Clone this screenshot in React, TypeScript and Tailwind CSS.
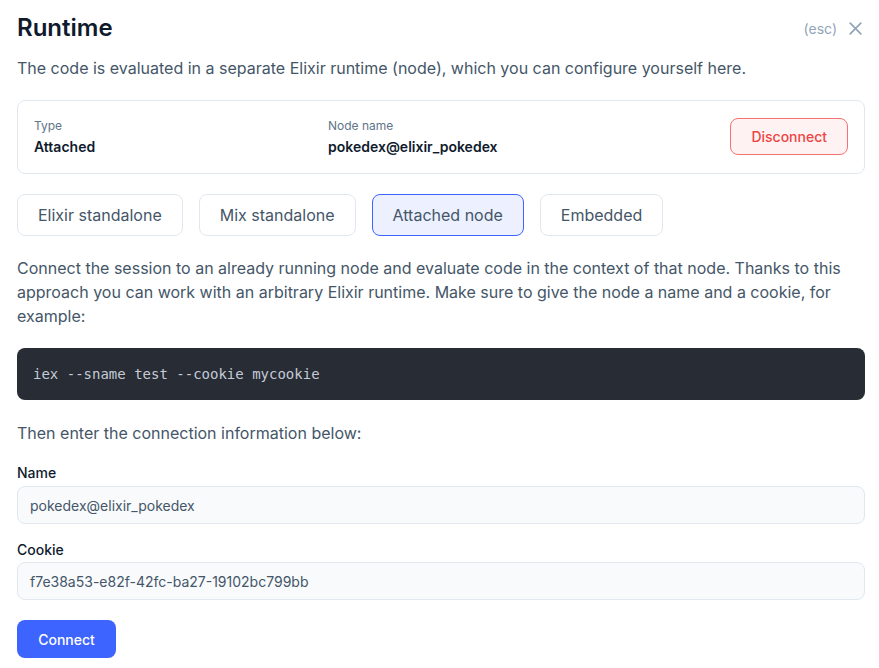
import React from 'react';

const tabs = ['Elixir standalone', 'Mix standalone', 'Attached node', 'Embedded'];

const App: React.FC = () => {
  return (
    <div className="w-[879px] h-[668px] bg-white px-[17px] pt-[13px] font-['Inter',sans-serif] text-[#445668] overflow-hidden">
      <div className="w-[848px] flex flex-col">
        {/* Header */}
        <div className="flex items-center justify-between h-[30px]">
          <h1 className="text-[24px] font-semibold text-[#0f1b2d] leading-none">Runtime</h1>
          <div className="flex items-center gap-[10px] mr-[1px]">
            <span className="text-[14px] text-[#91a4b7]">(esc)</span>
            <svg width="17" height="17" viewBox="0 0 24 24" fill="none" stroke="#91a4b7" strokeWidth="2.4" strokeLinecap="round">
              <path d="M4.5 4.5l15 15M19.5 4.5l-15 15" />
            </svg>
          </div>
        </div>
        <p className="mt-[13px] text-[16px] leading-[24px]">
          The code is evaluated in a separate Elixir runtime (node), which you can configure yourself here.
        </p>

        {/* Current runtime card */}
        <div className="mt-[20px] h-[74px] rounded-[8px] border border-[#e1e8f0] flex items-center px-[16px]">
          <div className="w-[294px] flex flex-col">
            <span className="text-[12px] leading-[16px] text-[#61758a]">Type</span>
            <span className="mt-[4px] text-[14px] leading-[18px] font-semibold text-[#0f1b2d]">Attached</span>
          </div>
          <div className="flex-1 flex flex-col">
            <span className="text-[12px] leading-[16px] text-[#61758a]">Node name</span>
            <span className="mt-[4px] text-[14px] leading-[18px] font-semibold text-[#0f1b2d]">pokedex@elixir_pokedex</span>
          </div>
          <button className="h-[37px] px-[20px] rounded-[8px] border border-[#f87171] bg-[#fef3f2] text-[#ef4444] text-[14px] font-medium -mt-[1px]">
            Disconnect
          </button>
        </div>

        {/* Runtime type tabs */}
        <div className="mt-[20px] flex gap-[16px]">
          {tabs.map((t) =>
            t === 'Attached node' ? (
              <button key={t} className="h-[42px] px-[20px] rounded-[8px] border border-[#3e64ff] bg-[#ecf0ff] text-[16px] text-[#445668]">
                {t}
              </button>
            ) : (
              <button key={t} className="h-[42px] px-[20px] rounded-[8px] border border-[#e1e8f0] bg-white text-[16px] text-[#445668]">
                {t}
              </button>
            )
          )}
        </div>

        <p className="mt-[20px] text-[16px] leading-[24px]">
          Connect the session to an already running node and evaluate code in the context of that node. Thanks to this approach you can work with an arbitrary Elixir runtime. Make sure to give the node a name and a cookie, for example:
        </p>

        <div className="mt-[20px] h-[52px] rounded-[8px] bg-[#282c34] flex items-center px-[16px]">
          <span className="font-['DejaVu_Sans_Mono',monospace] text-[14px] text-[#c4cad6]">
            iex --sname test --cookie mycookie
          </span>
        </div>

        <p className="mt-[21px] text-[16px] leading-[24px]">Then enter the connection information below:</p>

        <label className="mt-[18px] text-[14px] leading-[20px] font-medium text-[#0f1b2d]">Name</label>
        <div className="mt-[3px] h-[38px] rounded-[8px] border border-[#e1e8f0] bg-[#f8fafc] flex items-center px-[12px] text-[14px] text-[#445668]">
          pokedex@elixir_pokedex
        </div>

        <label className="mt-[16px] text-[14px] leading-[20px] font-medium text-[#0f1b2d]">Cookie</label>
        <div className="mt-[2px] h-[38px] rounded-[8px] border border-[#e1e8f0] bg-[#f8fafc] flex items-center px-[12px] text-[14px] text-[#445668]">
          f7e38a53-e82f-42fc-ba27-19102bc799bb
        </div>

        <div className="mt-[20px]">
          <button className="h-[38px] w-[99px] rounded-[8px] bg-[#3e64ff] text-white text-[14px] font-medium">
            Connect
          </button>
        </div>
      </div>
    </div>
  );
};

export default App;
